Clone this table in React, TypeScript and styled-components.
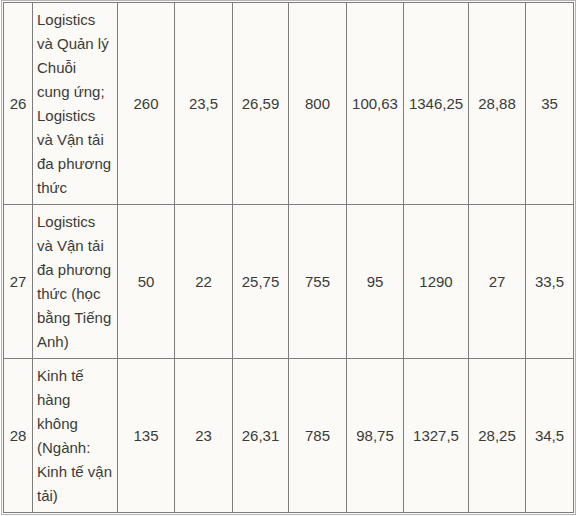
import styled, { createGlobalStyle } from "styled-components";

const GlobalStyle = createGlobalStyle`
  body {
    margin: 0;
    background: #ffffff;
  }
`;

const Table = styled.table`
  width: 575px;
  margin: 0 0 0 1px;
  table-layout: fixed;
  border-collapse: separate;
  border-spacing: 0;
  border: 1px solid #b4b4b4;
  padding: 1px;
  background: #fbfaf6;
  font-family: "Liberation Sans", Arial, sans-serif;
  font-size: 15px;
  line-height: 24px;
  color: #3a3a3a;
`;

const Cell = styled.td<{ $left?: boolean }>`
  box-sizing: border-box;
  border-left: 1px solid #7d7d7d;
  border-bottom: 1px solid #7d7d7d;
  padding: 5px 4px 4px;
  text-align: ${(p) => (p.$left ? "left" : "center")};
  vertical-align: middle;
  white-space: nowrap;

  tr:first-child > & {
    border-top: 1px solid #7d7d7d;
  }
  &:last-child {
    border-right: 1px solid #7d7d7d;
  }
`;

const COLS = [29, 85, 57, 58, 56, 58, 57, 65, 57, 49];

const ROWS: { no: string; name: string[]; values: string[] }[] = [
  {
    no: "26",
    name: [
      "Logistics",
      "và Quản lý",
      "Chuỗi",
      "cung ứng;",
      "Logistics",
      "và Vận tải",
      "đa phương",
      "thức",
    ],
    values: ["260", "23,5", "26,59", "800", "100,63", "1346,25", "28,88", "35"],
  },
  {
    no: "27",
    name: [
      "Logistics",
      "và Vận tải",
      "đa phương",
      "thức (học",
      "bằng Tiếng",
      "Anh)",
    ],
    values: ["50", "22", "25,75", "755", "95", "1290", "27", "33,5"],
  },
  {
    no: "28",
    name: ["Kinh tế", "hàng", "không", "(Ngành:", "Kinh tế vận", "tải)"],
    values: ["135", "23", "26,31", "785", "98,75", "1327,5", "28,25", "34,5"],
  },
];

const App = () => (
  <>
    <GlobalStyle />
    <Table>
      <colgroup>
        {COLS.map((w, i) => (
          <col key={i} style={{ width: w }} />
        ))}
      </colgroup>
      <tbody>
        {ROWS.map((row) => (
          <tr key={row.no}>
            <Cell>{row.no}</Cell>
            <Cell $left>
              {row.name.map((line, i) => (
                <span key={i}>
                  {i > 0 && <br />}
                  {line}
                </span>
              ))}
            </Cell>
            {row.values.map((v, i) => (
              <Cell key={i}>{v}</Cell>
            ))}
          </tr>
        ))}
      </tbody>
    </Table>
  </>
);

export default App;
